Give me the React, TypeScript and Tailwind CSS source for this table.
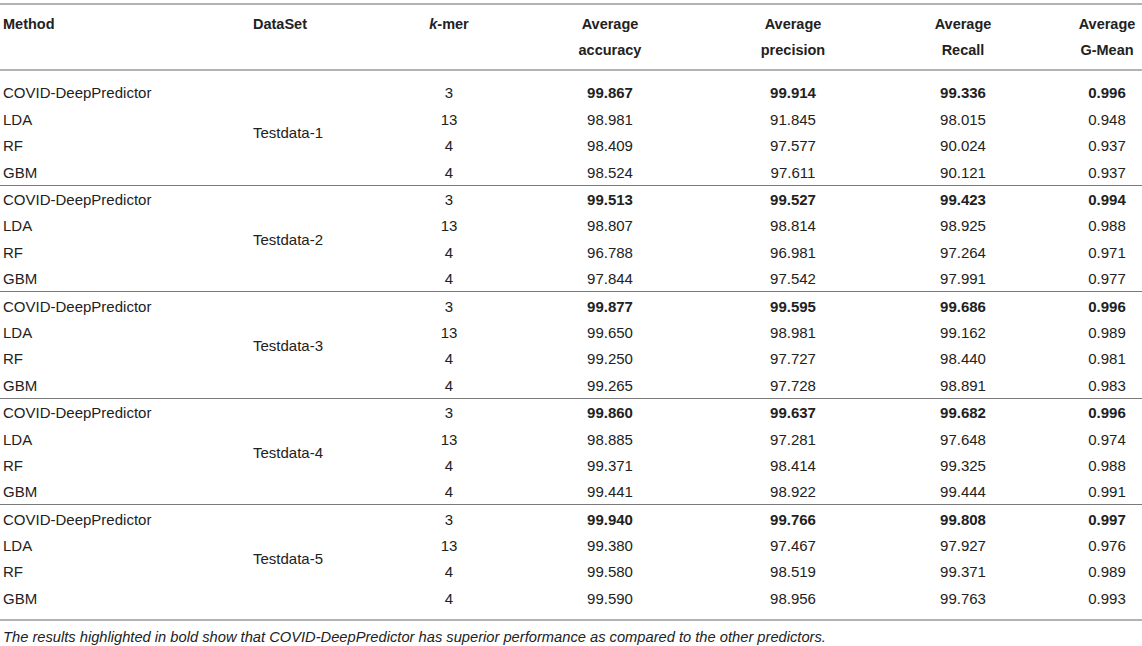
import React from "react";

interface Row {
  method: string;
  kmer: string;
  acc: string;
  prec: string;
  recall: string;
  gmean: string;
}

interface Group {
  dataset: string;
  rows: Row[];
}

const groups: Group[] = [
  {
    dataset: "Testdata-1",
    rows: [
      { method: "COVID-DeepPredictor", kmer: "3", acc: "99.867", prec: "99.914", recall: "99.336", gmean: "0.996" },
      { method: "LDA", kmer: "13", acc: "98.981", prec: "91.845", recall: "98.015", gmean: "0.948" },
      { method: "RF", kmer: "4", acc: "98.409", prec: "97.577", recall: "90.024", gmean: "0.937" },
      { method: "GBM", kmer: "4", acc: "98.524", prec: "97.611", recall: "90.121", gmean: "0.937" },
    ],
  },
  {
    dataset: "Testdata-2",
    rows: [
      { method: "COVID-DeepPredictor", kmer: "3", acc: "99.513", prec: "99.527", recall: "99.423", gmean: "0.994" },
      { method: "LDA", kmer: "13", acc: "98.807", prec: "98.814", recall: "98.925", gmean: "0.988" },
      { method: "RF", kmer: "4", acc: "96.788", prec: "96.981", recall: "97.264", gmean: "0.971" },
      { method: "GBM", kmer: "4", acc: "97.844", prec: "97.542", recall: "97.991", gmean: "0.977" },
    ],
  },
  {
    dataset: "Testdata-3",
    rows: [
      { method: "COVID-DeepPredictor", kmer: "3", acc: "99.877", prec: "99.595", recall: "99.686", gmean: "0.996" },
      { method: "LDA", kmer: "13", acc: "99.650", prec: "98.981", recall: "99.162", gmean: "0.989" },
      { method: "RF", kmer: "4", acc: "99.250", prec: "97.727", recall: "98.440", gmean: "0.981" },
      { method: "GBM", kmer: "4", acc: "99.265", prec: "97.728", recall: "98.891", gmean: "0.983" },
    ],
  },
  {
    dataset: "Testdata-4",
    rows: [
      { method: "COVID-DeepPredictor", kmer: "3", acc: "99.860", prec: "99.637", recall: "99.682", gmean: "0.996" },
      { method: "LDA", kmer: "13", acc: "98.885", prec: "97.281", recall: "97.648", gmean: "0.974" },
      { method: "RF", kmer: "4", acc: "99.371", prec: "98.414", recall: "99.325", gmean: "0.988" },
      { method: "GBM", kmer: "4", acc: "99.441", prec: "98.922", recall: "99.444", gmean: "0.991" },
    ],
  },
  {
    dataset: "Testdata-5",
    rows: [
      { method: "COVID-DeepPredictor", kmer: "3", acc: "99.940", prec: "99.766", recall: "99.808", gmean: "0.997" },
      { method: "LDA", kmer: "13", acc: "99.380", prec: "97.467", recall: "97.927", gmean: "0.976" },
      { method: "RF", kmer: "4", acc: "99.580", prec: "98.519", recall: "99.371", gmean: "0.989" },
      { method: "GBM", kmer: "4", acc: "99.590", prec: "98.956", recall: "99.763", gmean: "0.993" },
    ],
  },
];

const cols = "grid grid-cols-[250px_160px_78px_244px_122px_218px_70px]";

const App: React.FC = () => {
  return (
    <div
      className="w-[1142px] h-[646px] bg-white text-[#222] overflow-hidden"
      style={{ fontFamily: '"Liberation Sans", Arial, sans-serif' }}
    >
      <div className="pt-[3px]">
        {/* header */}
        <div className={`${cols} border-t-2 border-b-2 border-[#b3b3b3] py-[6px] text-[14.5px] font-bold leading-[26px]`}>
          <div className="pl-[3px]">Method</div>
          <div className="pl-[3px]">DataSet</div>
          <div className="text-center">
            <i>k</i>-mer
          </div>
          <div className="text-center">
            Average
            <br />
            accuracy
          </div>
          <div className="text-center">
            Average
            <br />
            precision
          </div>
          <div className="text-center">
            Average
            <br />
            Recall
          </div>
          <div className="text-center">
            Average
            <br />
            G-Mean
          </div>
        </div>

        {/* body */}
        <div className="py-[8px] border-b-2 border-[#b3b3b3] text-[15px]">
          {groups.map((g, gi) => (
            <div
              key={g.dataset}
              className={`${cols} grid-rows-[repeat(4,26.4px)] ${gi > 0 ? "border-t border-[#7a7a7a]" : ""}`}
            >
              {g.rows.map((r, ri) => {
                const bold = ri === 0 ? "font-bold" : "";
                return (
                  <React.Fragment key={r.method}>
                    <div className="pl-[3px] pt-[3px] flex items-center" style={{ gridRow: ri + 1, gridColumn: 1 }}>
                      {r.method}
                    </div>
                    {ri === 0 && (
                      <div className="pl-[3px] pt-[3px] flex items-center" style={{ gridRow: "1 / span 4", gridColumn: 2 }}>
                        {g.dataset}
                      </div>
                    )}
                    <div className="pt-[3px] flex items-center justify-center" style={{ gridRow: ri + 1, gridColumn: 3 }}>
                      {r.kmer}
                    </div>
                    <div className={`pt-[3px] flex items-center justify-center ${bold}`} style={{ gridRow: ri + 1, gridColumn: 4 }}>
                      {r.acc}
                    </div>
                    <div className={`pt-[3px] flex items-center justify-center ${bold}`} style={{ gridRow: ri + 1, gridColumn: 5 }}>
                      {r.prec}
                    </div>
                    <div className={`pt-[3px] flex items-center justify-center ${bold}`} style={{ gridRow: ri + 1, gridColumn: 6 }}>
                      {r.recall}
                    </div>
                    <div className={`pt-[3px] flex items-center justify-center ${bold}`} style={{ gridRow: ri + 1, gridColumn: 7 }}>
                      {r.gmean}
                    </div>
                  </React.Fragment>
                );
              })}
            </div>
          ))}
        </div>

        <p className="pl-[3px] mt-[8px] text-[14.7px] italic leading-[17px]">
          The results highlighted in bold show that COVID-DeepPredictor has superior performance as compared to the other predictors.
        </p>
      </div>
    </div>
  );
};

export default App;
